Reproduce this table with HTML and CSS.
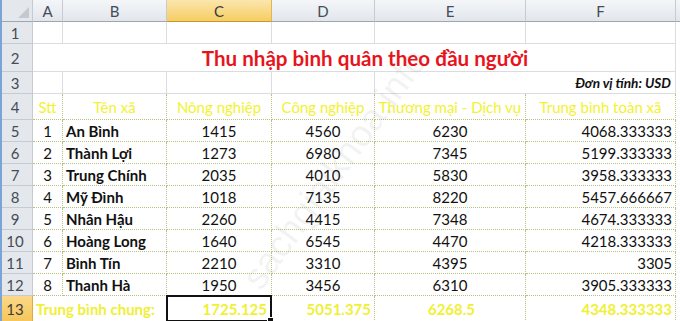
FILE: index.html
```html
<!DOCTYPE html>
<html lang="vi">
<head>
<meta charset="utf-8">
<title>Thu nhập bình quân</title>
<link rel="stylesheet" href="styles.css">
</head>
<body>
<div class="sheet">
  <div class="grid">
    <!-- column headers -->
    <div class="hd corner"><span class="tri"></span></div>
    <div class="hd col">A</div>
    <div class="hd col">B</div>
    <div class="hd col sel">C</div>
    <div class="hd col">D</div>
    <div class="hd col">E</div>
    <div class="hd col">F</div>
    <div class="hd col end"></div>

    <!-- row 1 -->
    <div class="hd rn">1</div>
    <div class="c g"></div><div class="c g"></div><div class="c g"></div><div class="c g"></div><div class="c g"></div><div class="c g"></div><div class="c end"></div>

    <!-- row 2 -->
    <div class="hd rn">2</div>
    <div class="c g title span6">Thu nhập bình quân theo đầu người</div><div class="c end"></div>

    <!-- row 3 -->
    <div class="hd rn">3</div>
    <div class="c g"></div><div class="c g"></div><div class="c g"></div><div class="c g"></div><div class="c g nob"></div><div class="c g unit">Đơn vị tính: USD</div><div class="c end"></div>

    <!-- row 4 -->
    <div class="hd rn">4</div>
    <div class="c d th">Stt</div>
    <div class="c d th">Tên xã</div>
    <div class="c d th">Nông nghiệp</div>
    <div class="c d th">Công nghiệp</div>
    <div class="c d th">Thương mại - Dịch vụ</div>
    <div class="c d th">Trung bình toàn xã</div>
    <div class="c end"></div>

    <div class="hd rn">5</div>
    <div class="c d ctr">1</div><div class="c d name">An Bình</div><div class="c d ctr">1415</div><div class="c d ctr">4560</div><div class="c d ctr">6230</div><div class="c d rt">4068.333333</div><div class="c end"></div>

    <div class="hd rn">6</div>
    <div class="c d ctr">2</div><div class="c d name">Thành Lợi</div><div class="c d ctr">1273</div><div class="c d ctr">6980</div><div class="c d ctr">7345</div><div class="c d rt">5199.333333</div><div class="c end"></div>

    <div class="hd rn">7</div>
    <div class="c d ctr">3</div><div class="c d name">Trung Chính</div><div class="c d ctr">2035</div><div class="c d ctr">4010</div><div class="c d ctr">5830</div><div class="c d rt">3958.333333</div><div class="c end"></div>

    <div class="hd rn">8</div>
    <div class="c d ctr">4</div><div class="c d name">Mỹ Đình</div><div class="c d ctr">1018</div><div class="c d ctr">7135</div><div class="c d ctr">8220</div><div class="c d rt">5457.666667</div><div class="c end"></div>

    <div class="hd rn">9</div>
    <div class="c d ctr">5</div><div class="c d name">Nhân Hậu</div><div class="c d ctr">2260</div><div class="c d ctr">4415</div><div class="c d ctr">7348</div><div class="c d rt">4674.333333</div><div class="c end"></div>

    <div class="hd rn">10</div>
    <div class="c d ctr">6</div><div class="c d name">Hoàng Long</div><div class="c d ctr">1640</div><div class="c d ctr">6545</div><div class="c d ctr">4470</div><div class="c d rt">4218.333333</div><div class="c end"></div>

    <div class="hd rn">11</div>
    <div class="c d ctr">7</div><div class="c d name">Bình Tín</div><div class="c d ctr">2210</div><div class="c d ctr">3310</div><div class="c d ctr">4395</div><div class="c d rt">3305</div><div class="c end"></div>

    <div class="hd rn">12</div>
    <div class="c d ctr">8</div><div class="c d name">Thanh Hà</div><div class="c d ctr">1950</div><div class="c d ctr">3456</div><div class="c d ctr">6310</div><div class="c d rt">3905.333333</div><div class="c end"></div>

    <div class="hd rn rsel">13</div>
    <div class="c d tot span2">Trung bình chung:</div>
    <div class="c d tot rt active">1725.125<span class="handle"></span></div>
    <div class="c d tot rt">5051.375</div>
    <div class="c d tot ctr">6268.5</div>
    <div class="c d tot rt">4348.333333</div>
    <div class="c end"></div>
  </div>
  <div class="watermark">sachgiaikhoa.info</div>
</div>
</body>
</html>
```

FILE: styles.css
```css
html, body {
  margin: 0;
  padding: 0;
  background: #ffffff;
}
.sheet {
  position: relative;
  width: 678px;
  height: 321px;
  overflow: hidden;
  border-left: 2px solid #7aa3d6;
  font-family: Lato, "Open Sans", sans-serif;
  font-size: 15px;
  color: #111;
}
.grid {
  display: grid;
  grid-template-columns: 31px 30px 104px 105px 103px 151px 150px 4px;
  grid-template-rows: 22px 22px 28px 22px 26px repeat(8, 22px) 26px;
}
.hd {
  background: linear-gradient(#f4f6f9, #e2e6eb);
  border-right: 1px solid #c5cbd3;
  border-bottom: 1px solid #c5cbd3;
  color: #444c57;
  font-size: 15px;
  display: flex;
  align-items: center;
  justify-content: center;
  box-sizing: border-box;
}
.hd.corner {
  position: relative;
  background: #e4e8ed;
  border-bottom: 1px solid #9da6b1;
}
.tri {
  position: absolute;
  right: 3px;
  bottom: 3px;
  width: 0;
  height: 0;
  border-left: 11px solid transparent;
  border-bottom: 11px solid #c4c9cf;
}
.hd.col {
  border-bottom: 1px solid #9da6b1;
}
.hd.col.end {
  border-right: none;
}
.hd.sel {
  background: linear-gradient(#fbe6ad, #f5cd62);
  border-right-color: #e2b452;
  border-bottom: 1px solid #c9962e;
  color: #3b3b3b;
}
.hd.rn {
  background: #e4e8ed;
  padding-right: 4px;
}
.hd.rsel {
  background: linear-gradient(#fbd98a, #f5c65a);
  border-right-color: #e0aa3e;
  color: #3b3b3b;
}
.c {
  box-sizing: border-box;
  display: flex;
  align-items: center;
  white-space: nowrap;
  min-width: 0;
  position: relative;
}
.c.g {
  border-right: 1px solid #dadcdd;
  border-bottom: 1px solid #dadcdd;
}
.c.g.nob {
  border-right: none;
}
.c.end {
  border-bottom: none;
}
.span6 {
  grid-column: span 6;
}
.span2 {
  grid-column: span 2;
}
.title {
  justify-content: center;
  padding-left: 22px;
  color: #e8141c;
  font-weight: 700;
  font-size: 20.6px;
}
.unit {
  justify-content: flex-end;
  padding-right: 4px;
  font-weight: 700;
  font-style: italic;
  font-size: 13.6px;
}
.c.d {
  border-right: 1px dotted #b9c27d;
  border-bottom: 1px dotted #b9c27d;
}
.th {
  justify-content: center;
  color: #f2f230;
}
.ctr {
  justify-content: center;
}
.rt {
  justify-content: flex-end;
  padding-right: 3px;
}
.name {
  font-weight: 700;
  padding-left: 3px;
}
.tot {
  color: #f0f036;
  font-weight: 700;
  padding-left: 3px;
}
.active {
  border: 2px solid #111 !important;
  margin: -1px 0 0 -1px;
}
.handle {
  position: absolute;
  right: -4px;
  bottom: -4px;
  width: 5px;
  height: 5px;
  background: #111;
  border: 1px solid #fff;
}
.watermark {
  position: absolute;
  left: 190px;
  top: 148px;
  transform: rotate(-54deg);
  font-family: "Liberation Sans", sans-serif;
  font-size: 37px;
  color: rgba(120, 120, 120, 0.09);
  white-space: nowrap;
  pointer-events: none;
}
```
